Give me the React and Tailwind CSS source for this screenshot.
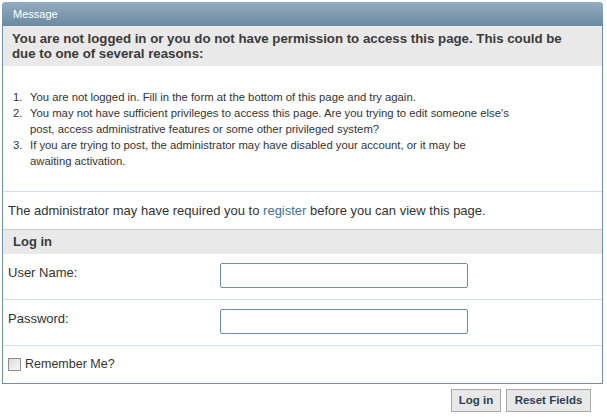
export default function App() {
  return (
    <div className="w-[607px] h-[417px] bg-white text-[13px] text-[#333] font-['Tahoma','Liberation_Sans',sans-serif] pt-[2px] pl-[2px]">
      <div className="w-[601px] border border-[#6f8ea6] border-t-0 rounded-t-[4px]">
        <div className="h-[24px] -mx-px rounded-t-[4px] bg-gradient-to-b from-[#94adc0] to-[#6a8aa2] text-white text-[11px] pl-[11px] flex items-center leading-none">
          Message
        </div>
        <div className="bg-[#e9e9e9] px-[9px] pt-[5px] pb-[5px] font-bold text-[13.25px] leading-[15px] text-[#3a3a3a]">
          You are not logged in or you do not have permission to access this page. This could be<br />
          due to one of several reasons:
        </div>
        <div className="pt-[23px] pb-[22px] pl-[10px] border-b border-[#d1dde7] text-[11.3px] leading-[16px]">
          <ol className="list-none">
            <ListItem n="1">You are not logged in. Fill in the form at the bottom of this page and try again.</ListItem>
            <ListItem n="2">
              You may not have sufficient privileges to access this page. Are you trying to edit someone else's<br />
              post, access administrative features or some other privileged system?
            </ListItem>
            <ListItem n="3">
              If you are trying to post, the administrator may have disabled your account, or it may be<br />
              awaiting activation.
            </ListItem>
          </ol>
        </div>
        <div className="px-[5px] h-[37px] flex items-center">
          The administrator may have required you to&nbsp;<a className="text-[#417394]" href="#">register</a>&nbsp;before you can view this page.
        </div>
        <div className="bg-[#e9e9e9] border-t border-[#cbcbcb] h-[25px] flex items-center px-[10px] font-bold text-[#3a3a3a]">
          Log in
        </div>
        <FieldRow label="User Name:" type="text" />
        <FieldRow label="Password:" type="password" />
        <div className="h-[37px] flex items-center px-[5px] gap-[4px] text-[12.5px]">
          <span className="w-[13px] h-[13px] border border-[#8f8f8f] bg-gradient-to-br from-[#dcdcdc] to-[#f7f7f7]" />
          <span>Remember Me?</span>
        </div>
      </div>
      <div className="flex justify-end gap-[5px] pr-[16px] mt-[5px]">
        <Btn className="w-[50px]">Log in</Btn>
        <Btn className="w-[85px]">Reset Fields</Btn>
      </div>
    </div>
  )
}

function ListItem({ n, children }) {
  return (
    <li className="flex">
      <span className="w-[17px] shrink-0">{n}.</span>
      <span className="whitespace-nowrap">{children}</span>
    </li>
  )
}

function FieldRow({ label, type }) {
  return (
    <div className="h-[46px] border-b border-[#d1dde7] flex px-[5px]">
      <div className="w-[212px] pt-[9px]">{label}</div>
      <input type={type} className="mt-[9px] w-[248px] h-[25px] border border-[#6b8fa6] rounded-[2px] outline-none" />
    </div>
  )
}

function Btn({ className, children }) {
  return (
    <button className={`h-[23px] border border-[#a8a8a8] bg-[#e8e8e8] font-bold text-[11.5px] text-[#2c3e55] ${className}`}>
      {children}
    </button>
  )
}
